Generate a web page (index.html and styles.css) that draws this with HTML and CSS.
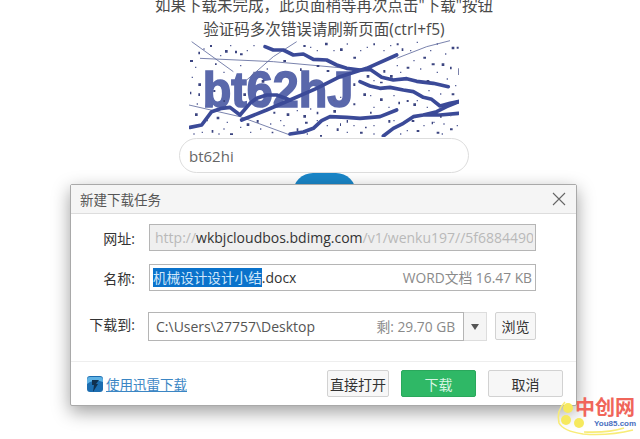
FILE: index.html
```html
<!DOCTYPE html>
<html lang="zh">
<head>
<meta charset="utf-8">
<title>新建下载任务</title>
<link rel="stylesheet" href="styles.css">
</head>
<body>
<main class="page">
  <p class="note">如果下载未完成&#xFF0C;此页面稍等再次点击"下载"按钮</p>
  <p class="note">验证码多次错误请刷新页面(ctrl+f5)</p>
  <svg class="captcha" viewBox="147 120 810 291" width="270" height="97" aria-label="验证码">
    <text class="cap-text" x="188" y="320" textLength="452" lengthAdjust="spacingAndGlyphs">bt62hJ</text>
    <path class="cap-thin" d="M155 125L280 215M180 175L400 185L620 205M320 240L400 170L470 125M147 315L300 350L450 405M770 175L860 140L930 122"/>
    <path class="cap-thick" d="M375 140L400 150L430 150L460 165L490 162L520 178L560 180L590 195L620 205L660 210L690 208L725 232L760 240L800 236L830 244L880 250L925 260"/>
    <path class="cap-thick" d="M150 382L185 375L215 335L245 325L270 322L300 345L330 310L350 295L380 285L410 285L450 300"/>
    <path class="cap-thick" d="M305 360L380 330L450 300L530 265L600 230L680 205L770 165"/>
    <path class="cap-thick" d="M660 245L690 258L720 265L750 262L790 270L820 275L850 292L875 298L900 318L930 310L955 305"/>
    <path class="cap-thick" d="M450 402L490 396L520 385L545 362L570 350L620 352L660 355L720 350L770 330"/>
    <path class="cap-thick" d="M730 408L760 385L790 370L820 350L850 345L900 345L955 340M850 345L890 335L920 320L955 305"/>
    <path class="cap-dots" d="M255 150h8v8h-8zM285 152h6v8h-6zM300 160h8v6h-8zM210 135h6v6h-6zM150 180h9v6h-9zM175 155h5v8h-5zM225 190h5v5h-5zM490 135h7v6h-7zM555 128h8v8h-8zM600 145h8v8h-8zM640 170h8v6h-8zM700 130h5v6h-5zM770 130h6v6h-6zM785 145h5v8h-5zM850 170h8v6h-8zM905 190h8v8h-8zM935 140h8v8h-8zM950 140h6v6h-6zM875 190h9v6h-9zM800 200h8v6h-8zM730 210h6v8h-6zM680 225h8v8h-8zM640 250h6v8h-6zM720 245h8v5h-8zM860 240h8v6h-8zM930 200h5v8h-5zM955 205h3v20h-3zM800 300h6v6h-6zM720 295h8v8h-8zM670 280h8v8h-8zM640 310h6v6h-6zM580 330h8v8h-8zM530 335h5v8h-5zM490 345h8v8h-8zM440 340h8v8h-8zM400 335h6v6h-6zM350 360h6v8h-6zM320 370h8v8h-8zM270 400h9v5h-9zM215 390h5v8h-5zM165 340h8v8h-8zM175 250h8v8h-8zM175 280h5v8h-5zM150 275h4v8h-4zM230 350h8v8h-8zM495 365h8v6h-8zM470 385h5v8h-5zM590 385h6v8h-6zM600 370h3v8h-3zM660 395h8v6h-8zM675 380h5v5h-5zM830 390h8v6h-8zM875 365h4v8h-4zM890 395h8v6h-8zM930 385h8v6h-8zM820 310h8v8h-8zM775 305h5v8h-5zM935 280h8v6h-8zM750 225h8v8h-8zM365 240h8v8h-8zM310 280h8v8h-8zM430 180h8v6h-8zM530 195h8v6h-8zM480 205h5v8h-5zM250 300h5v6h-5zM395 395h5v5h-5zM220 270h6v6h-6zM560 210h8v6h-8zM815 360h8v6h-8zM900 345h5v8h-5zM745 360h6v8h-6zM540 405h6v5h-6zM620 360h4v8h-4zM690 335h5v6h-5z"/>
    <path class="cap-specks" d="M165 200h4v4h-4zM190 145h4v4h-4zM240 165h4v4h-4zM270 135h4v4h-4zM320 150h4v4h-4zM340 135h4v4h-4zM510 140h4v4h-4zM530 150h4v4h-4zM580 150h4v4h-4zM620 130h4v4h-4zM660 150h4v4h-4zM680 140h4v4h-4zM730 150h4v4h-4zM750 135h4v4h-4zM810 150h4v4h-4zM830 125h4v4h-4zM870 150h4v4h-4zM890 130h4v4h-4zM915 160h4v4h-4zM820 180h4v4h-4zM770 195h4v4h-4zM700 240h4v4h-4zM780 215h4v4h-4zM840 205h4v4h-4zM890 215h4v4h-4zM920 235h4v4h-4zM945 255h4v4h-4zM900 280h4v4h-4zM865 270h4v4h-4zM830 300h4v4h-4zM760 285h4v4h-4zM700 320h4v4h-4zM690 285h4v4h-4zM745 320h4v4h-4zM860 320h4v4h-4zM880 365h4v4h-4zM850 375h4v4h-4zM800 390h4v4h-4zM760 360h4v4h-4zM700 375h4v4h-4zM640 375h4v4h-4zM620 395h4v4h-4zM560 375h4v4h-4zM530 360h4v4h-4zM510 325h4v4h-4zM470 330h4v4h-4zM420 360h4v4h-4zM390 370h4v4h-4zM360 385h4v4h-4zM330 395h4v4h-4zM300 380h4v4h-4zM250 385h4v4h-4zM235 400h4v4h-4zM185 395h4v4h-4zM160 400h4v4h-4zM200 360h4v4h-4zM260 365h4v4h-4zM155 230h4v4h-4zM170 310h4v4h-4zM930 345h4v4h-4zM950 375h4v4h-4zM910 370h4v4h-4zM905 400h4v4h-4zM780 400h4v4h-4zM700 400h4v4h-4zM500 400h4v4h-4zM430 375h4v4h-4zM580 300h4v4h-4zM600 290h4v4h-4zM520 240h4v4h-4zM440 230h4v4h-4zM340 215h4v4h-4zM380 205h4v4h-4zM300 195h4v4h-4zM250 215h4v4h-4z"/>
  </svg>
  <div class="answer">bt62hi</div>
  <div class="go"></div>
</main>

<section class="dialog">
  <header class="dialog-title">
    <span>新建下载任务</span>
    <svg class="close" viewBox="0 0 14 14" width="14" height="14" aria-label="关闭"><path d="M1 1L13 13M13 1L1 13"/></svg>
  </header>
  <div class="dialog-body">
    <div class="row row-url">
      <label class="row-label">网址:</label>
      <div class="field field-url"><span class="dim">http://</span><span class="host">wkbjcloudbos.bdimg.com</span><span class="dim">/v1/wenku197//5f6884490</span></div>
    </div>
    <div class="row row-name">
      <label class="row-label">名称:</label>
      <div class="field field-name"><span class="name"><span class="selected">机械设计设计小结</span>.docx</span><span class="meta">WORD文档 16.47 KB</span></div>
    </div>
    <div class="row row-path">
      <label class="row-label">下载到:</label>
      <div class="path">
        <div class="path-input"><span class="path-text">C:\Users\27757\Desktop</span><span class="meta">剩: 29.70 GB</span></div>
        <div class="path-drop"><svg viewBox="0 0 8 6" width="8" height="6"><path d="M0 0H8L4 6Z"/></svg></div>
      </div>
      <button class="btn btn-browse">浏览</button>
    </div>
  </div>
  <footer class="dialog-foot">
    <svg class="thunder" viewBox="0 0 16 16" width="16" height="16"><rect width="16" height="16" rx="3" fill="#1c6db0"/><path d="M0 4Q0 1 3 1H13Q16 1 16 4V6Q9 3 3 6L0 8Z" fill="#5fb2e4"/><path d="M5 4L12 4L9 8L11 8L6 16L7 9L5 9Z" fill="#10304f"/></svg>
    <a class="thunder-link">使用迅雷下载</a>
    <div class="foot-actions">
      <button class="btn btn-open">直接打开</button>
      <button class="btn btn-primary">下载</button>
      <button class="btn btn-cancel">取消</button>
    </div>
  </footer>
</section>

<aside class="mark">
  <svg class="mark-logo" viewBox="0 0 86 42" width="86" height="42"><path class="mark-ring" d="M11 5Q2 14 5 26Q9 34 29 37Q55 39 79 33"/><path class="mark-ring" d="M30 35Q55 36 70 31"/><circle class="mark-dot" cx="14" cy="11" r="5"/><circle class="mark-dot" cx="12" cy="23" r="5"/><circle class="mark-dot" cx="25" cy="26" r="5"/></svg>
  <span class="mark-name">中创网</span>
  <span class="mark-url">You85.com</span>
</aside>
</body>
</html>
```

FILE: styles.css
```css
* { box-sizing: border-box; }
html, body { margin: 0; height: 100%; }
body {
  width: 640px;
  height: 439px;
  overflow: hidden;
  position: relative;
  background: #fff;
  font-family: "Open Sans", "Noto Sans CJK SC", sans-serif;
  color: #333;
}
.page {
  width: 648px;
  display: flex;
  flex-direction: column;
  align-items: center;
  margin-top: -7px;
}
.note {
  margin: 0;
  height: 24px;
  line-height: 24px;
  font-size: 15.5px;
  color: #4a4a4a;
  white-space: nowrap;
}
.captcha { display: block; margin-top: -1px; background: #fff; filter: blur(.35px); }
.cap-text { font-family: "Liberation Sans", sans-serif; font-weight: 700; font-size: 150px; fill: #5a68ab; stroke: #5a68ab; stroke-width: 5; }
.cap-thin { fill: none; stroke: #5f6a9c; stroke-width: 2.5; }
.cap-thick { fill: none; stroke: #3b4a98; stroke-width: 11; stroke-linejoin: round; stroke-linecap: round; }
.cap-dots { fill: #3c4580; }
.cap-specks { fill: #5a6399; }
.answer {
  width: 290px;
  height: 35px;
  margin-top: 1px;
  padding-left: 9px;
  border: 1px solid #ddd;
  border-radius: 18px;
  background: #fff;
  font-size: 15px;
  line-height: 34px;
  color: #666;
}
.go {
  width: 63px;
  height: 40px;
  background: #1a86c8;
  border-radius: 20px;
}

.dialog {
  position: absolute;
  left: 70px;
  top: 184px;
  width: 507px;
  height: 222px;
  display: flex;
  flex-direction: column;
  background: #fff;
  border: 1px solid #a9a9a9;
  border-radius: 2px;
  box-shadow: 0 6px 18px rgba(0, 0, 0, .38);
}
.dialog-title {
  flex: none;
  height: 29px;
  display: flex;
  align-items: center;
  justify-content: space-between;
  padding: 0 10px 0 9px;
  background: #f5f5f5;
  border-bottom: 1px solid #ddd;
  font-size: 13.5px;
  color: #555;
}
.close { fill: none; stroke: #666; stroke-width: 1.1; }
.dialog-body {
  flex: 1;
  display: flex;
  flex-direction: column;
  padding: 10px 40px 0 0;
  border-bottom: 1px solid #eee;
}
.row {
  display: flex;
  align-items: center;
}
.row-label {
  flex: none;
  width: 64px;
  text-align: right;
  margin-right: 14px;
  font-size: 14px;
  color: #333;
}
.row-name { margin-top: 13px; }
.row-path { margin-top: 21px; }
.row-path .row-label { margin-right: 13px; margin-bottom: 6px; }
.field {
  width: 387px;
  height: 27px;
  border: 1px solid #b5b5b5;
  font-size: 14px;
  line-height: 25px;
  white-space: nowrap;
  overflow: hidden;
}
.field-url { padding-left: 5px; background: #efefef; border-right-width: 3px; border-right-color: #efefef; outline: 1px solid #b5b5b5; outline-offset: -1px; }
.dim { color: #b9b9b9; }
.host { color: #333; }
.field-name { display: flex; justify-content: space-between; padding: 0 3px 0 3px; }
.name { color: #333; }
.selected { background: #0a72cb; color: #cfe6fa; font-size: 13.6px; }
.meta { color: #8a8a8a; font-size: 13.8px; }
.path {
  display: flex;
  width: 340px;
  height: 29px;
}
.path-input {
  flex: 1;
  display: flex;
  justify-content: space-between;
  padding: 0 8px 0 7px;
  border: 1px solid #b5b5b5;
  font-size: 14px;
  line-height: 27px;
  color: #555;
}
.path-drop {
  flex: none;
  width: 23px;
  display: flex;
  align-items: center;
  justify-content: center;
  background: #f5f5f5;
  border: 1px solid #ddd;
  border-left: 0;
}
.path-drop svg { fill: #555; }
.btn {
  font-family: inherit;
  height: 27px;
  padding: 0;
  border: 1px solid #d2d2d2;
  border-radius: 2px;
  background: #f7f7f7;
  font-size: 14px;
  color: #333;
}
.btn-browse { width: 41px; height: 28px; margin-left: 8px; margin-top: -1px; }
.dialog-foot {
  flex: none;
  height: 43px;
  display: flex;
  align-items: center;
  padding: 0 13px 0 16px;
}
.thunder { flex: none; }
.thunder-link {
  margin-left: 3px;
  font-size: 13.5px;
  color: #3b86c4;
  text-decoration: underline;
}
.foot-actions {
  margin-left: auto;
  display: flex;
  gap: 12px;
}
.btn-open { width: 62px; }
.btn-primary { width: 75px; background: #2fb866; border-color: #2aa85c; color: #d8f5e3; }
.btn-cancel { width: 75px; }

.mark {
  position: absolute;
  left: 554px;
  top: 396px;
  width: 86px;
  height: 43px;
}
.mark-logo { position: absolute; left: 0; top: 1px; }
.mark-ring { fill: none; stroke: #f8ec78; stroke-width: 1.6; }
.mark-dot { fill: #f6e95e; }
.mark-name {
  position: absolute;
  left: 21px;
  top: 1px;
  font-family: "Noto Sans CJK SC", sans-serif;
  font-size: 20px;
  line-height: 20px;
  height: 20px;
  overflow: visible;
  font-weight: 700;
  color: #f0655a;
  white-space: nowrap;
}
.mark-url {
  position: absolute;
  left: 40px;
  top: 23px;
  font-family: "Liberation Sans", sans-serif;
  font-size: 8px;
  line-height: 10px;
  font-weight: 700;
  color: #4a6fc0;
}
```
